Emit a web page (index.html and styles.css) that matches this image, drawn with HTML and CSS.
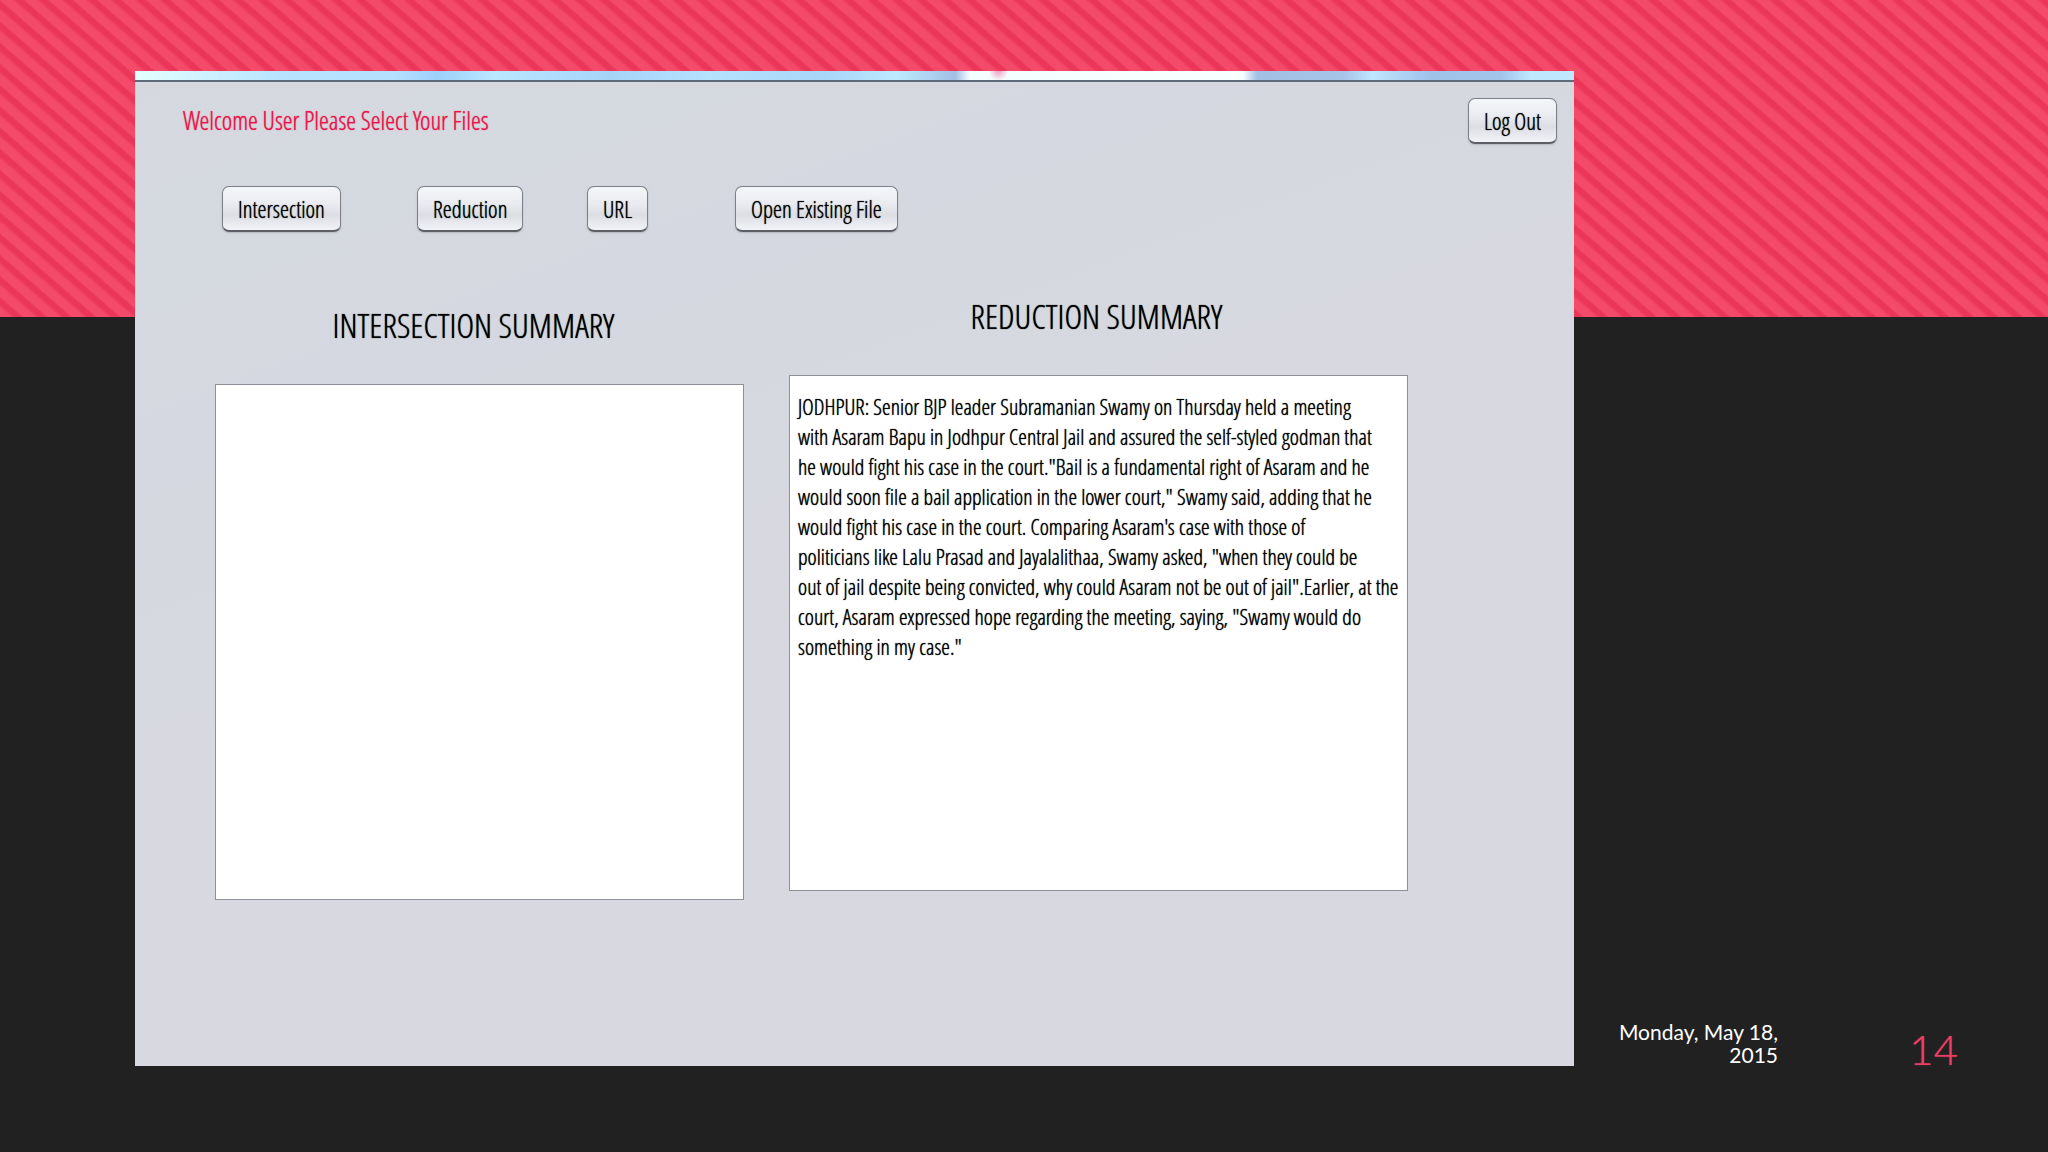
FILE: index.html
```html
<!DOCTYPE html>
<html lang="en">
<head>
    <meta charset="UTF-8">
    <meta name="viewport" content="width=device-width, initial-scale=1.0">
    <title>Summary</title>
    <link rel="stylesheet" href="styles.css">
</head>
<body>
    <div class="slide">
        <main class="window">
            <div class="titlebar"></div>
            <header class="top">
                <p class="welcome">Welcome User Please Select Your Files</p>
                <button type="button">Log Out</button>
            </header>

            <nav class="toolbar">
                <button type="button">Intersection</button>
                <button type="button">Reduction</button>
                <button type="button">URL</button>
                <button type="button">Open Existing File</button>
            </nav>

            <div class="summaries">
                <section class="summary intersection">
                    <label for="intersection">INTERSECTION SUMMARY</label>
                    <textarea id="intersection" readonly></textarea>
                </section>
                <section class="summary">
                    <label for="reduction">REDUCTION SUMMARY</label>
                    <textarea id="reduction" readonly>JODHPUR: Senior BJP leader Subramanian Swamy on Thursday held a meeting
with Asaram Bapu in Jodhpur Central Jail and assured the self-styled godman that
he would fight his case in the court."Bail is a fundamental right of Asaram and he
would soon file a bail application in the lower court," Swamy said, adding that he
would fight his case in the court. Comparing Asaram's case with those of
politicians like Lalu Prasad and Jayalalithaa, Swamy asked, "when they could be
out of jail despite being convicted, why could Asaram not be out of jail".Earlier, at the
court, Asaram expressed hope regarding the meeting, saying, "Swamy would do
something in my case."</textarea>
                </section>
            </div>
        </main>

        <footer class="slide-footer">
            <p class="date">Monday, May 18,<br>2015</p>
            <p class="number">14</p>
        </footer>
    </div>
</body>
</html>
```
FILE: styles.css
```css
* {
    box-sizing: border-box;
}

body {
    margin: 0;
    background-color: #212122;
    font-family: "Open Sans Condensed Light", "Roboto Condensed", "Liberation Sans", sans-serif;
    font-size: 22px;
    color: #000;
}

p {
    margin: 0;
}

/* pink striped band behind the top of the slide */
.slide {
    display: grid;
    grid-template-columns: 1fr 474px;
    min-height: 100vh;
    padding: 71px 0 86px 135px;
    background-image: repeating-linear-gradient(41deg, #f54b6a 0, #f44968 7px, #ea3659 10px, #ea3659 14px, #f54b6a 16px);
    background-size: 100% 317px;
    background-repeat: no-repeat;
}

.window {
    background: linear-gradient(160deg, #d5d9df 0%, #d5d8e0 25%, #d7d8e0 45%, #d7d8e0 100%);
}

.titlebar {
    height: 11px;
    border-bottom: 2px solid #5d6b78;
    background:
        radial-gradient(circle at 60% 0, #f0a0c8 0, transparent 10px),
        linear-gradient(90deg, #e4ffff 0%, #b8e4ff 10%, #b5e0fe 18%, #9dd0fb 21%, #b9e8ff 25%, #a6d4f8 33%, #b5e2fd 40%, #a8d6f8 48%, #bdeaff 53%, #a2bfe4 57%, #f4feff 58%, #f8ffff 77%, #a2bfe4 78%, #a6c3e8 84%, #bfe6ff 86%, #9fc2ea 90%, #a3c5ec 95%, #bfe8ff 97%, #bfe8ff 100%);
}

.top {
    display: flex;
    justify-content: space-between;
    align-items: center;
    padding: 16px 17px 0 48px;
}

.welcome {
    font-size: 25px;
    line-height: 32px;
    padding-bottom: 2px;
    color: #e8164a;
    text-shadow: 0 0 1px #e8164a;
}

button {
    height: 46px;
    padding: 1px 15px 0;
    border: 1px solid #7d8086;
    border-bottom: 2px solid #5c5f66;
    border-radius: 7px;
    background: linear-gradient(#f5f6f9 0%, #e9ebf0 40%, #dcdee4 65%, #f2f3f7 100%);
    box-shadow: 0 1px 2px #b4b6be;
    font-family: inherit;
    font-size: 23px;
    color: #000;
    text-shadow: 0 0 1px #000;
    cursor: pointer;
}

.toolbar {
    display: grid;
    grid-template-columns: 195px 170px 148px auto;
    justify-items: start;
    padding: 42px 87px 0;
}

.summaries {
    display: grid;
    grid-template-columns: 529fr 619fr;
    gap: 45px;
    padding: 59px 166px 0 80px;
}

.summary {
    display: flex;
    flex-direction: column;
}

.intersection {
    padding-top: 9px;
}

label {
    height: 84px;
    padding-right: 4px;
    line-height: 50px;
    text-align: center;
    font-size: 34px;
    text-shadow: 0 0 1px #000;
}

.intersection label {
    padding-right: 12px;
}

textarea {
    height: 516px;
    padding: 15px 8px;
    border: 1px solid #8d9097;
    border-radius: 0;
    background-color: #fff;
    resize: none;
    overflow: hidden;
    font-family: inherit;
    font-size: 22px;
    line-height: 30px;
    color: #000;
    text-shadow: 0 0 1px #000;
    outline: none;
}

.slide-footer {
    align-self: end;
    display: flex;
    align-items: flex-end;
    font-family: Lato, sans-serif;
}

.date {
    width: 204px;
    text-align: right;
    font-size: 21px;
    line-height: 23px;
    color: #fff;
}

.number {
    width: 180px;
    text-align: right;
    font-size: 42px;
    line-height: 34px;
    font-weight: 300;
    color: #ec3f64;
    text-shadow: 0 0 1px #ec3f64;
}
```
